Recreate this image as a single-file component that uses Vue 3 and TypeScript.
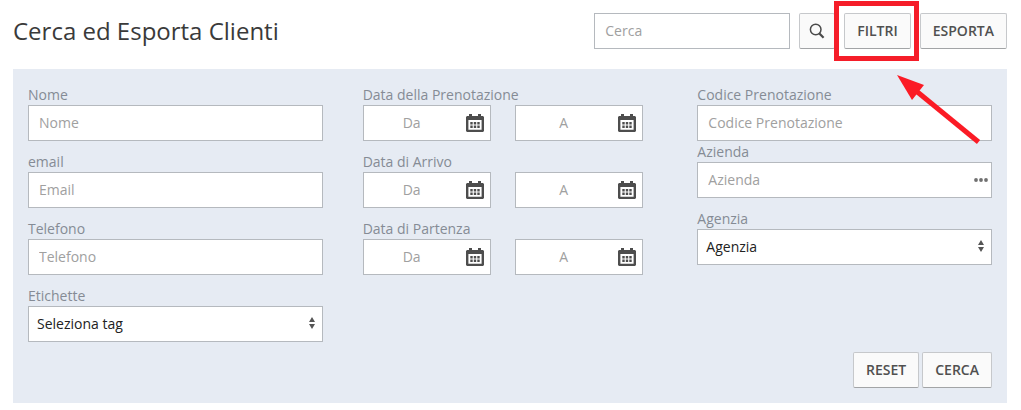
<script setup lang="ts">
import { reactive, ref } from 'vue'

interface DateRange {
  id: string
  label: string
  from: string
  to: string
}

const query = ref('')
const client = reactive({ name: '', email: '', phone: '', tag: '' })
const booking = reactive({ code: '', company: '', agency: '' })
const ranges = reactive<DateRange[]>([
  { id: 'booking', label: 'Data della Prenotazione', from: '', to: '' },
  { id: 'arrival', label: 'Data di Arrivo', from: '', to: '' },
  { id: 'departure', label: 'Data di Partenza', from: '', to: '' },
])
const ends = [
  { key: 'from', text: 'Da' },
  { key: 'to', text: 'A' },
] as const

function reset(): void {
  Object.assign(client, { name: '', email: '', phone: '', tag: '' })
  Object.assign(booking, { code: '', company: '', agency: '' })
  ranges.forEach((r) => {
    r.from = ''
    r.to = ''
  })
}
</script>

<template>
  <main class="page">
    <header class="top">
      <h1 class="title">Cerca ed Esporta Clienti</h1>
      <input v-model="query" class="control search" type="text" placeholder="Cerca" aria-label="Cerca" />
      <button class="btn icon-btn" type="button" aria-label="Avvia ricerca">
        <svg width="16" height="16" viewBox="0 0 16 16" aria-hidden="true">
          <circle cx="6.7" cy="6.500" r="5.3" fill="none" stroke="#4a4a4a" stroke-width="1.500" />
          <path d="M10.4 10.4 14.6 14.8" fill="none" stroke="#4a4a4a" stroke-width="2.2" />
        </svg>
      </button>
      <div class="marked">
        <button class="btn" type="button">FILTRI</button>
        <span class="frame"></span>
        <svg class="arrow" width="86" height="72" viewBox="0 0 86 72" aria-hidden="true">
          <path d="M18 16 81.500 68" stroke="#fb1b25" stroke-width="5" fill="none" />
          <path d="M0 1 27 11 15 26Z" fill="#fb1b25" />
        </svg>
      </div>
      <button class="btn" type="button">ESPORTA</button>
    </header>

    <form class="panel" @submit.prevent>
      <div class="columns">
        <div class="column">
          <div class="field">
            <label for="name">Nome</label>
            <input id="name" v-model="client.name" class="control" type="text" placeholder="Nome" />
          </div>
          <div class="field">
            <label for="email">email</label>
            <input id="email" v-model="client.email" class="control" type="text" placeholder="Email" />
          </div>
          <div class="field">
            <label for="phone">Telefono</label>
            <input id="phone" v-model="client.phone" class="control" type="text" placeholder="Telefono" />
          </div>
          <div class="field">
            <label for="tag">Etichette</label>
            <div class="box">
              <select id="tag" v-model="client.tag" class="control">
                <option value="">Seleziona tag</option>
              </select>
              <svg class="mark sort" width="6" height="12" viewBox="0 0 6 12" aria-hidden="true">
                <path d="M3 0 6 5H0ZM0 7H6L3 12Z" fill="#555" />
              </svg>
            </div>
          </div>
        </div>

        <div class="column dates">
          <div v-for="range in ranges" :key="range.id" class="field">
            <label :for="range.id + '-from'">{{ range.label }}</label>
            <div class="pair">
              <div v-for="end in ends" :key="end.key" class="box">
                <input
                  :id="range.id + '-' + end.key"
                  v-model="range[end.key]"
                  class="control date"
                  type="text"
                  :placeholder="end.text"
                  :aria-label="range.label + ' ' + end.text"
                />
                <svg class="mark calendar" width="18" height="18" viewBox="0 0 18 18" aria-hidden="true">
                  <path
                    fill="#4d4d4d"
                    fill-rule="evenodd"
                    d="M1 2H3V0H6V2H12V0H15V2H17L18 3V17L17 18H1L0 17V3ZM2.4 6V15.7H15.6V6Z"
                  />
                  <path
                    fill="#4d4d4d"
                    d="M4.300 8H6.700V10.400H4.300ZM7.800 8H10.200V10.400H7.800ZM11.300 8H13.700V10.400H11.300ZM4.300 11.500H6.700V13.900H4.300ZM7.800 11.500H10.200V13.900H7.800ZM11.300 11.500H13.700V13.900H11.300Z"
                  />
                </svg>
              </div>
            </div>
          </div>
        </div>

        <div class="column">
          <div class="field tight">
            <label for="code">Codice Prenotazione</label>
            <input id="code" v-model="booking.code" class="control" type="text" placeholder="Codice Prenotazione" />
          </div>
          <div class="field">
            <label for="company">Azienda</label>
            <div class="box">
              <input id="company" v-model="booking.company" class="control" type="text" placeholder="Azienda" />
              <svg class="mark dots" width="14" height="4" viewBox="0 0 14 4" aria-hidden="true">
                <circle cx="2" cy="2" r="1.900" fill="#707070" />
                <circle cx="7" cy="2" r="1.900" fill="#707070" />
                <circle cx="12" cy="2" r="1.900" fill="#707070" />
              </svg>
            </div>
          </div>
          <div class="field">
            <label for="agency">Agenzia</label>
            <div class="box">
              <select id="agency" v-model="booking.agency" class="control">
                <option value="">Agenzia</option>
              </select>
              <svg class="mark sort" width="6" height="12" viewBox="0 0 6 12" aria-hidden="true">
                <path d="M3 0 6 5H0ZM0 7H6L3 12Z" fill="#555" />
              </svg>
            </div>
          </div>
        </div>
      </div>

      <div class="actions">
        <button class="btn" type="button" @click="reset">RESET</button>
        <button class="btn" type="submit">CERCA</button>
      </div>
    </form>
  </main>
</template>

<style>
body {
  margin: 0;
  background: #fff;
}
</style>

<style scoped>
.page {
  padding: 13px 14px 7px 13px;
  font-family: 'Open Sans', 'Noto Sans', sans-serif;
  font-size: 14px;
  line-height: 20px;
}

.top {
  display: flex;
  align-items: center;
  gap: 9px;
  margin-bottom: 20px;
}

.title {
  flex: 1;
  margin: 0;
  color: #3a3a3a;
  font-size: 24px;
  font-weight: 400;
  line-height: 36px;
}

.control {
  display: block;
  box-sizing: border-box;
  width: 100%;
  height: 36px;
  padding: 0 10px 2px;
  border: 1px solid #b5b9be;
  border-radius: 0;
  background: #fff;
  color: #333;
  font: inherit;
}

.control::placeholder {
  color: #a0a0a0;
  opacity: 1;
}

select.control {
  appearance: none;
  padding: 0 24px 0 8px;
  color: #222;
}

.search {
  width: 196px;
}

.btn {
  box-sizing: border-box;
  height: 36px;
  padding: 0 12px;
  border: 1px solid #c6c8cb;
  border-bottom-color: #a2a4a6;
  border-radius: 2px;
  background: #fafafa;
  color: #505050;
  font: inherit;
  font-weight: 600;
  white-space: nowrap;
  cursor: pointer;
}

.icon-btn {
  display: flex;
  align-items: center;
  justify-content: center;
  width: 36px;
  padding: 0;
}

.marked {
  position: relative;
}

.marked .btn {
  display: block;
}

.frame {
  position: absolute;
  inset: -12px -8px -12px -10px;
  border: 5px solid #f51d29;
  pointer-events: none;
}

.arrow {
  position: absolute;
  z-index: 1;
  top: 61px;
  left: 53px;
  pointer-events: none;
}

.panel {
  padding: 16px 15px 15px;
  background: #e6ebf3;
}

.columns {
  display: grid;
  grid-template-columns: repeat(3, minmax(0, 1fr));
  gap: 40px;
  margin-bottom: 10px;
}

.column {
  display: flex;
  flex-direction: column;
  gap: 11px;
}

.dates {
  width: 95%;
}

.field label {
  display: block;
  color: #858b95;
}

.tight {
  margin-bottom: -10px;
}

.pair {
  display: grid;
  grid-template-columns: 1fr 1fr;
  gap: 24px;
}

.box {
  position: relative;
}

.date {
  padding-right: 40px;
  text-align: center;
}

.mark {
  position: absolute;
  pointer-events: none;
}

.calendar {
  top: 9px;
  right: 7px;
}

.dots {
  top: 16px;
  right: 4px;
}

.sort {
  top: 11px;
  right: 8px;
}

.actions {
  display: flex;
  justify-content: flex-end;
  gap: 3px;
}
</style>
